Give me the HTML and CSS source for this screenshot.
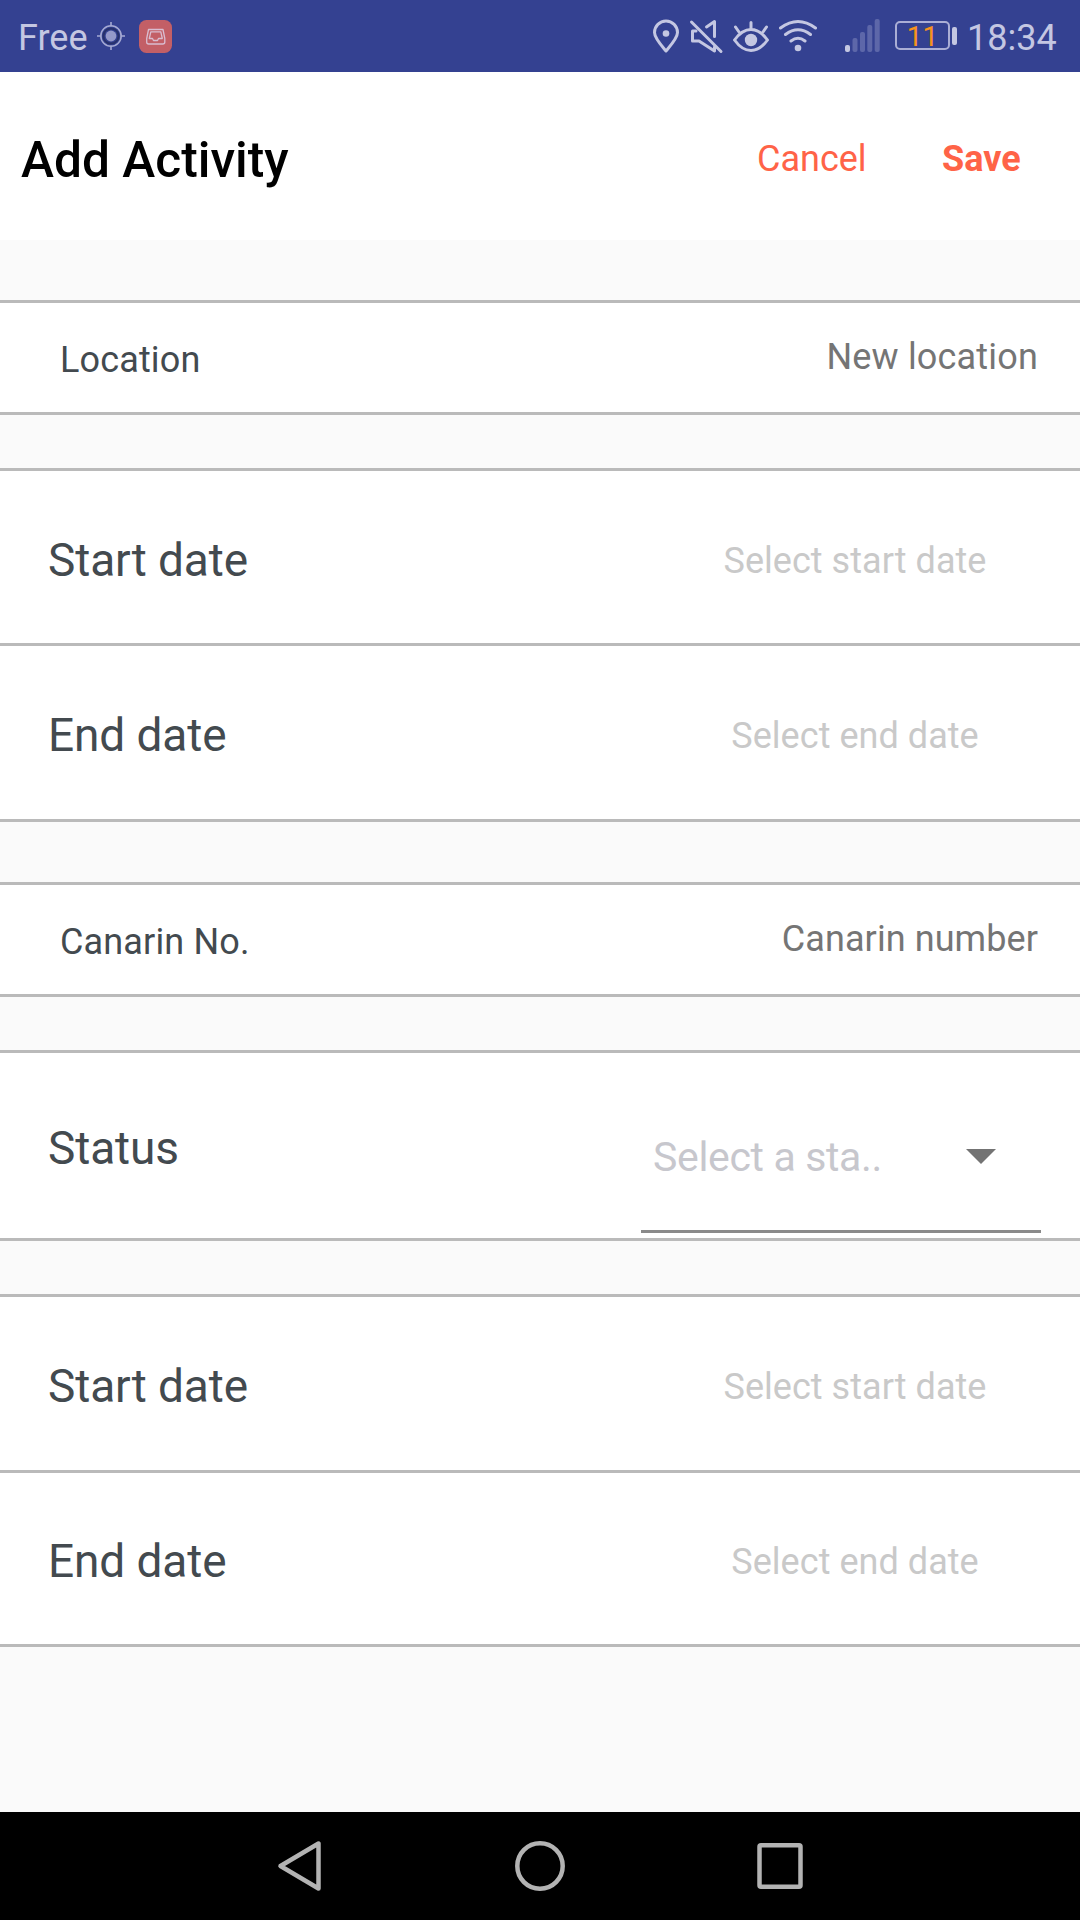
FILE: index.html
```html
<!DOCTYPE html>
<html lang="en">
<head>
<meta charset="utf-8">
<title>Add Activity</title>
<link rel="stylesheet" href="styles.css">
</head>
<body>
<div class="status-bar">
  <div class="status-left">
    <span class="carrier">Free</span>
    <svg class="gps" width="28" height="28" viewBox="0 0 28 28" fill="none" stroke="#a4a9d3" stroke-width="1.6"><circle cx="14" cy="14" r="10.2"/><circle cx="14" cy="14" r="7.6" stroke="#27316b" stroke-width="2"/><circle cx="14" cy="14" r="5.4" fill="#9499c9" stroke="none"/><path d="M14 0v4.5M14 23.500v4.500M0 14h4.500M23.500 14h4.500"/></svg>
    <svg class="inbox" width="33" height="33" viewBox="0 0 33 33" fill="none"><rect width="33" height="33" rx="7.500" fill="#c35f66"/><g stroke="#d9bdd0" stroke-width="1.300" stroke-linejoin="round"><path d="M9.500 9.500h14.500l1.800 9v3.500q0 2-2 2H9.700q-2 0-2-2v-3.500z"/><path d="M10.300 18.500l1.500-6.700h10l1.500 6.700h-3.800l-1 2h-4l-1-2z"/></g></svg>
  </div>
  <div class="status-right">
    <svg class="icons" width="180" height="40" viewBox="0 0 180 40" fill="none" stroke="#c4c7e2" stroke-width="3" stroke-linecap="round" stroke-linejoin="round">
      <path d="M14 35C9 29 2.500 22 2.500 16.500a11.500 11.500 0 0 1 23 0C25.500 22 19 29 14 35z"/><circle cx="14" cy="17.500" r="3.300" fill="#c4c7e2" stroke="none"/>
      <path d="M39.500 6 69 35.500M54.500 11 62.500 5.500v15M44 15h-3.500v10H47L62.500 35v-4"/>
      <path d="M82.500 24Q90 13.500 99 13.500T115.500 24Q108 34.500 99 34.500T82.500 24zM99 6.500v6M83.500 11l3.500 5M114.500 11l-3.500 5"/><circle cx="99" cy="24" r="6.200" fill="#c4c7e2" stroke="none"/>
      <path d="M128.500 12Q146 -1 163.500 12M133.500 18.500Q146 9 158.500 18.500M139 25Q146 19.500 153 25"/><circle cx="146" cy="32" r="3.300" fill="#c4c7e2" stroke="none"/>
    </svg>
    <svg class="signal" width="35" height="34" viewBox="0 0 35 34" fill="#5d67a9"><rect y="26" width="5" height="7" rx="2" fill="#c4c7e2"/><rect x="7.500" y="19" width="5" height="14" rx="2"/><rect x="15" y="13" width="5" height="20" rx="2"/><rect x="22.300" y="6" width="5" height="27" rx="2"/><rect x="29.700" y="0" width="5" height="33" rx="2"/></svg>
    <div class="battery"><span class="cell">11</span><span class="cap"></span></div>
    <span class="clock">18:34</span>
  </div>
</div>
<header class="header">
  <h1 class="title">Add Activity</h1>
  <span class="cancel">Cancel</span>
  <span class="save">Save</span>
</header>
<main class="form">
  <section class="group"><div class="row small"><span class="label">Location</span><span class="value">New location</span></div></section>
  <section class="group"><div class="row"><span class="label">Start date</span><span class="hint">Select start date</span></div><div class="row tall"><span class="label">End date</span><span class="hint">Select end date</span></div></section>
  <section class="group wide"><div class="row small"><span class="label">Canarin No.</span><span class="value number">Canarin number</span></div></section>
  <section class="group"><div class="row status"><span class="label">Status</span><div class="picker"><span class="choice">Select a sta..</span><svg width="30" height="15" viewBox="0 0 30 15"><path d="M0 0h30L15 15z" fill="#737373"/></svg></div></div></section>
  <section class="group last"><div class="row"><span class="label">Start date</span><span class="hint">Select start date</span></div><div class="row"><span class="label">End date</span><span class="hint">Select end date</span></div></section>
</main>
<nav class="nav">
  <svg width="528" height="54" viewBox="0 0 528 54" fill="none" stroke="#b3b3b3" stroke-width="4.500" stroke-linejoin="round"><path d="M42.500 4.500v45L4.500 27z"/><circle cx="264" cy="27" r="22.700"/><rect x="483.500" y="6.300" width="41" height="41.500" rx="1.500"/></svg>
</nav>
</body>
</html>
```
FILE: styles.css
```css
* { box-sizing: border-box; }
body {
  margin: 0;
  width: 1080px;
  height: 1920px;
  display: flex;
  flex-direction: column;
  overflow: hidden;
  background: #fafafa;
  font-family: Roboto, sans-serif;
  font-size: 36px;
  line-height: 42px;
  white-space: nowrap;
}
svg { display: block; flex: none; }
.status-bar {
  height: 72px;
  flex: none;
  display: flex;
  justify-content: space-between;
  padding: 0 23px 0 18px;
  background: #344191;
  color: #c4c7e2;
}
.status-left, .status-right { display: flex; align-items: flex-start; }
.carrier { margin-top: 17px; width: 79px; }
.gps { margin-top: 22px; }
.inbox { margin: 20px 0 0 14px; }
.icons { margin-top: 16px; }
.signal { margin: 19px 0 0 13px; }
.battery { display: flex; align-items: center; margin: 21px 0 0 15px; }
.cell {
  width: 55px;
  height: 29px;
  border: 2px solid #aaaed5;
  border-radius: 5px;
  color: #f7931e;
  font-size: 28px;
  line-height: 27px;
  text-align: center;
}
.cap { width: 5px; height: 18px; margin-left: 2px; border-radius: 2px; background: #c4c7e2; }
.clock { margin: 17px 0 0 10px; width: 90px; }
.header {
  height: 168px;
  flex: none;
  display: flex;
  align-items: flex-start;
  padding-left: 21px;
  background: #fff;
  color: #ff6347;
}
.title { margin: 58px 0 0; width: 736px; color: #000; font-size: 49.700px; line-height: 60px; font-weight: 500; }
.cancel { margin-top: 66px; width: 185px; }
.save { margin-top: 66px; font-weight: 700; }
.form { flex: 1; display: flex; flex-direction: column; gap: 53px; padding-top: 60px; }
.group { background: #fff; border-top: 3px solid #bababa; }
.wide { margin-top: 7px; }
.row {
  height: 175px;
  display: flex;
  align-items: center;
  justify-content: space-between;
  padding: 6px 0 0 48px;
  border-bottom: 3px solid #bababa;
}
.tall { height: 176px; padding-top: 4px; }
.last .row { height: 176px; padding-top: 5px; }
.last .row + .row { height: 174px; }
.label { color: #434a4f; font-size: 46px; line-height: 54px; letter-spacing: -0.1px; }
.hint { width: 450px; padding-top: 2px; text-align: center; color: #c9c9c9; letter-spacing: 0.04px; }
.small { height: 112px; padding: 0 42px 0 60px; align-items: flex-start; }
.small .label { margin-top: 36px; font-size: 36px; line-height: 42px; letter-spacing: 0.15px; }
.value { margin-top: 33px; color: #757575; letter-spacing: 0.18px; }
.number { letter-spacing: 0.08px; }
.status { height: 188px; padding-top: 4px; padding-right: 39px; }
.picker {
  align-self: flex-start;
  width: 400px;
  height: 176px;
  display: flex;
  align-items: flex-start;
  justify-content: space-between;
  padding: 75px 45px 0 12px;
  border-bottom: 3px solid #8a8a8a;
}
.choice { color: #c7c7cd; font-size: 41px; line-height: 50px; letter-spacing: -0.35px; }
.picker svg { margin-top: 17px; }
.nav { height: 108px; flex: none; display: flex; align-items: center; justify-content: center; background: #000; }
```
